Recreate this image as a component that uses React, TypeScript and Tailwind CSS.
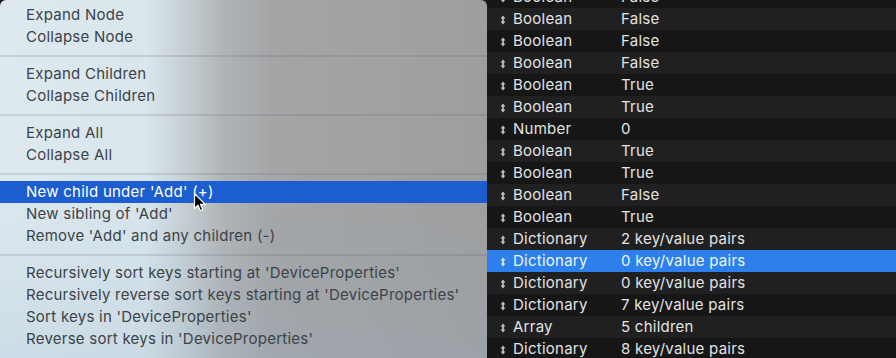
import React from "react";

type Item = { label: string; hl?: boolean } | "sep";

const menu: Item[] = [
  { label: "Expand Node" },
  { label: "Collapse Node" },
  "sep",
  { label: "Expand Children" },
  { label: "Collapse Children" },
  "sep",
  { label: "Expand All" },
  { label: "Collapse All" },
  "sep",
  { label: "New child under 'Add' (+)", hl: true },
  { label: "New sibling of 'Add'" },
  { label: "Remove 'Add' and any children (-)" },
  "sep",
  { label: "Recursively sort keys starting at 'DeviceProperties'" },
  { label: "Recursively reverse sort keys starting at 'DeviceProperties'" },
  { label: "Sort keys in 'DeviceProperties'" },
  { label: "Reverse sort keys in 'DeviceProperties'" },
];

const rows: [string, string][] = [
  ["Boolean", "False"],
  ["Boolean", "False"],
  ["Boolean", "False"],
  ["Boolean", "False"],
  ["Boolean", "True"],
  ["Boolean", "True"],
  ["Number", "0"],
  ["Boolean", "True"],
  ["Boolean", "True"],
  ["Boolean", "False"],
  ["Boolean", "True"],
  ["Dictionary", "2 key/value pairs"],
  ["Dictionary", "0 key/value pairs"],
  ["Dictionary", "0 key/value pairs"],
  ["Dictionary", "7 key/value pairs"],
  ["Array", "5 children"],
  ["Dictionary", "8 key/value pairs"],
];

function Stepper({ light }: { light?: boolean }) {
  return (
    <svg width="6" height="10" viewBox="0 0 6 10" className="shrink-0">
      <path
        d="M3 0.5 L5.5 3.5 H3.9 V6.5 H5.5 L3 9.5 L0.5 6.5 H2.1 V3.5 H0.5 Z"
        fill={light ? "#dbe9ff" : "#bdbdbd"}
      />
    </svg>
  );
}

function Cursor() {
  return (
    <svg
      width="14"
      height="21"
      viewBox="0 0 14 21"
      className="absolute left-[193px] top-[192px]"
    >
      <path
        d="M1.5 1.5 L1.5 16.5 L5 13.2 L7.4 18.8 L9.8 17.8 L7.5 12.4 L12.2 12.4 Z"
        fill="#000"
        stroke="#fff"
        strokeWidth="1.2"
        strokeLinejoin="round"
      />
    </svg>
  );
}

export default function App() {
  return (
    <div
      className="relative flex w-[896px] h-[358px] overflow-hidden bg-[#1a1a1a]"
      style={{ fontFamily: "Inter, 'Noto Sans', sans-serif" }}
    >
      <div className="w-[487px] shrink-0 h-full rounded-t-[6px] pt-[4px] bg-[linear-gradient(to_bottom,rgba(150,175,200,0)_50%,rgba(150,175,200,0.22)_100%),linear-gradient(to_right,#dde9ef_0%,#d9e6ec_30%,#c6cfd3_38%,#b0b4b6_46%,#a4a5a6_56%,#9e9e9e_100%)]">
        {menu.map((it, i) =>
          it === "sep" ? (
            <div key={i} className="h-[15px] flex items-center">
              <div className="w-full h-[2px] bg-[rgba(80,90,100,0.16)]" />
            </div>
          ) : (
            <div
              key={i}
              className={
                "h-[22px] flex items-center pl-[26px] text-[15px] tracking-[0.25px] " +
                (it.hl ? "bg-[#1c5dcf] text-white" : "text-[#3c4349]")
              }
            >
              {it.label}
            </div>
          )
        )}
      </div>
      <div className="flex-1 -mt-[14px]">
        {rows.map(([t, v], i) => {
          const hl = i === 12;
          const bg = hl ? "bg-[#2d80ec]" : i % 2 === 1 ? "bg-[#202020]" : "bg-[#161616]";
          return (
            <div
              key={i}
              className={"h-[22px] flex items-center pl-[13px] pt-[1px] text-[15px] tracking-[0.25px] " + bg + (hl ? " text-[#eef5ff]" : " text-[#e2e2e2]")}
            >
              <Stepper light={hl} />
              <div className="w-[115px] shrink-0 pl-[7px]">{t}</div>
              <div>{v}</div>
            </div>
          );
        })}
      </div>
      <Cursor />
    </div>
  );
}
